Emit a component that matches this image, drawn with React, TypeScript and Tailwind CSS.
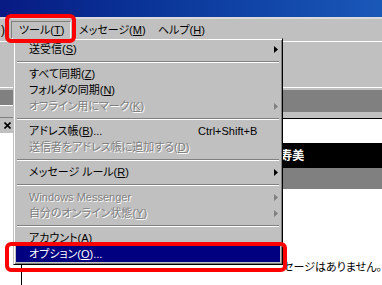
import React from "react";

const U = ({ c }: { c: string }) => (
  <span className="underline underline-offset-[1px] decoration-1">{c}</span>
);

const Arrow = ({ gray }: { gray?: boolean }) => (
  <svg width="4" height="7" viewBox="0 0 4 7" className="block">
    <polygon points="0,0 4,3.5 0,7" fill={gray ? "#808080" : "#000"} />
  </svg>
);

type ItemProps = {
  label: React.ReactNode;
  shortcut?: string;
  arrow?: boolean;
  disabled?: boolean;
  active?: boolean;
};

const Item = ({ label, shortcut, arrow, disabled, active }: ItemProps) => (
  <div
    className={
      "flex h-[16px] items-center leading-[16px] pl-[13px] " +
      (active ? "bg-[#000080] text-white " : "") +
      (disabled ? "text-[#808080] [text-shadow:1px_1px_0_#ffffff] " : "")
    }
  >
    <span className="flex-1 whitespace-nowrap">{label}</span>
    <span className="w-[82px] flex items-center justify-end pr-[2px]">
      {shortcut ? <span className="flex-1 text-left">{shortcut}</span> : null}
      {arrow ? <Arrow gray={disabled} /> : null}
    </span>
  </div>
);

const Sep = () => (
  <div className="h-[9px] pt-[4px] px-[1px]">
    <div className="h-[1px] bg-[#808080]" />
    <div className="h-[1px] bg-white" />
  </div>
);

export default function App() {
  return (
    <div className="relative w-[382px] h-[285px] overflow-hidden bg-[#c0c0c0] text-black text-[11px] font-['Liberation_Sans','Noto_Sans_CJK_JP',sans-serif] [font-feature-settings:'palt']">
      {/* title bar */}
      <div className="h-[17px] bg-gradient-to-r from-[#081a84] to-[#1a58b8]" />
      {/* menu bar */}
      <div className="h-[24px] border-t-2 border-[#dadada] flex items-center pl-[1px]">
        <span className="w-[10px] text-[12px]">)</span>
        <div className="w-[60px] h-[18px] border border-t-[#808080] border-l-[#808080] border-r-white border-b-white pl-[7px] leading-[16px] whitespace-nowrap">
          ツール(<U c="T" />)
        </div>
        <div className="w-[79px] pl-[8px] whitespace-nowrap">
          メッセージ(<U c="M" />)
        </div>
        <div className="pl-[8px] whitespace-nowrap">
          ヘルプ(<U c="H" />)
        </div>
      </div>
      {/* toolbar */}
      <div className="h-[49px] border-t border-white">
        <div className="h-[45px]" />
        <div className="h-[1px] bg-white" />
      </div>
      {/* panes */}
      <div className="flex h-[195px]">
        <div className="w-[26px] flex flex-col border-r border-black">
          <div className="h-[15px] bg-[#808080]" />
          <div className="h-[12px] border-t border-white bg-[#c0c0c0]" />
          <div className="h-[1px] bg-[#808080]" />
          <div className="h-[15px] bg-[#c0c0c0] flex items-center pl-[4px]">
            <svg width="7" height="7" viewBox="0 0 7 7">
              <path d="M0.5 0.5 L6.5 6.5 M6.5 0.5 L0.5 6.5" stroke="#000" strokeWidth="1.6" />
            </svg>
          </div>
          <div className="flex-1 bg-white" />
        </div>
        <div className="flex-1 flex flex-col">
          <div className="h-[22px] bg-[#808080]" />
          <div className="h-[6px] bg-[#c0c0c0]" />
          <div className="h-[1px] bg-black" />
          <div className="h-[24px] bg-white" />
          <div className="h-[25px] bg-black text-white font-bold text-[12px] pl-[258px] flex items-center">
            寿美
          </div>
          <div className="h-[21px] bg-[#808080]" />
          <div className="flex-1 bg-white pt-[71px] pl-[261px] text-[11px] whitespace-nowrap leading-[14px]">
            セージはありません。
          </div>
        </div>
      </div>

      {/* dropdown menu */}
      <div className="absolute left-[13px] top-[38px] w-[270px] border border-t-[#c0c0c0] border-l-[#c0c0c0] border-r-black border-b-black bg-[#c0c0c0] p-[2px] shadow-[inset_1px_1px_0_#ffffff,inset_-1px_-1px_0_#808080]">
        <Item label={<>送受信(<U c="S" />)</>} arrow />
        <Sep />
        <Item label={<>すべて同期(<U c="Z" />)</>} />
        <Item label={<>フォルダの同期(<U c="N" />)</>} />
        <Item label={<>オフライン用にマーク(<U c="K" />)</>} arrow disabled />
        <Sep />
        <Item label={<>アドレス帳(<U c="B" />)...</>} shortcut="Ctrl+Shift+B" />
        <Item label={<>送信者をアドレス帳に追加する(<U c="D" />)</>} disabled />
        <Sep />
        <Item label={<>メッセージ ルール(<U c="R" />)</>} arrow />
        <Sep />
        <Item label="Windows Messenger" arrow disabled />
        <Item label={<>自分のオンライン状態(<U c="Y" />)</>} arrow disabled />
        <Sep />
        <Item label={<>アカウント(<U c="A" />)</>} />
        <Item label={<>オプション(<U c="O" />)...</>} active />
      </div>

      {/* red annotation boxes */}
      <div className="absolute left-[5px] top-[14px] w-[71px] h-[29px] border-[4px] border-[#ff0000] rounded-[6px]" />
      <div className="absolute left-[5px] top-[242px] w-[282px] h-[30px] border-[4px] border-[#ff0000] rounded-[6px]" />
    </div>
  );
}
